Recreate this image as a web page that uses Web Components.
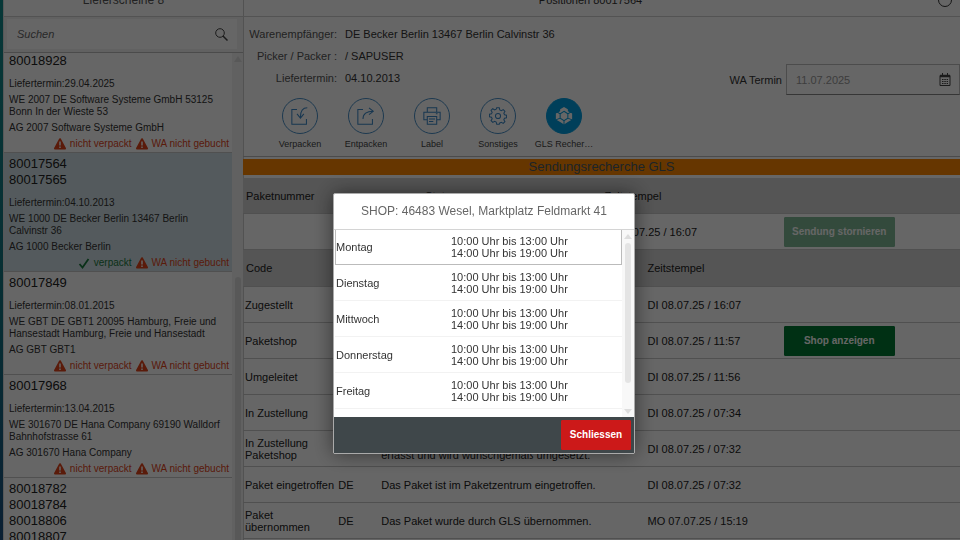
<!DOCTYPE html>
<html lang="de">
<head>
<meta charset="utf-8">
<title>Lieferscheine</title>
<style>
html,body{height:100%}
body{margin:0;overflow:hidden;background:#fff;color:#333;font:11px/12px "Liberation Sans",Arial,sans-serif}
</style>
</head>
<body>
<warehouse-app></warehouse-app>
<script>
const define = (name, html) => customElements.define(name, class extends HTMLElement {
  connectedCallback() {
    if (this.shadowRoot) return;
    const t = document.createElement('template');
    t.innerHTML = typeof html === 'function' ? html(this) : html;
    this.attachShadow({mode: 'open'}).append(t.content.cloneNode(true));
  }
});

const ICONS = {
  pack: '<path d="M7 3H1v17h17v-6M19 1c-5 0-8 4-8 11M7 8l4 5 4-5"/>',
  unpack: '<path d="M7 3H1v17h17v-6M7 14c0-6 4-9 12-9M14 1l5 4-5 4"/>',
  print: '<path d="M5 6V1h11v5M5 15H1V6h19v9h-4M5 11h11v9H5zM7 14h7M7 17h5M15 8h2"/>',
  gear: '<path d="M9 1h3l.6 2.5 1.8.8L16.600 3l2 2-1.300 2.200.8 1.800 2.400.5v3l-2.400.6-.8 1.800 1.300 2.200-2 2-2.200-1.300-1.800.8L12 20H9l-.6-2.500-1.800-.8L4.400 18l-2-2 1.300-2.200-.8-1.800L.5 11.500v-3L2.900 8l.8-1.800L2.400 4l2-2 2.200 1.300 1.800-.8z"/><circle cx="10.500" cy="10.500" r="3"/>',
  box: '<path fill="currentColor" d="M10.500 1l4 2v2l4 2v8l-4 1-4 4-4-4-4-1V7l4-2V3z" transform="translate(1 0)" stroke="none"/><path stroke="#009de0" d="M10.500 5l4.500 3v5l-4.500 3L6 13V8zM2 4l4.500 4M19 4l-4.500 4M10.500 16v5M6 13l-4 2M15 13l4 2"/>'
};
ICONS.box = '<path fill="currentColor" stroke="none" d="M10.500 0l4.500 2.500v2.500l5 2.500v7L15 17.500 10.500 20.500 6 17.500l-5-3v-7L6 5V2.500z"/><path stroke="#009de0" d="M10.500 5l4.500 3v5l-4.500 3L6 13V8zM2 5.500L6 8M19 5.500L15 8M10.500 16v5M6 13l-5 2M15 13l5 2"/>';

define('nav-bar', `
<style>
:host{display:flex;align-items:center;height:33px;padding-top:3px;border-bottom:1px solid #d0d0d0;color:#555}
h1{flex:1;margin:0;text-align:center;font:12px/16px "Liberation Sans",Arial,sans-serif}
:host([small]) h1{font-size:11px;color:#333}
</style><h1><slot></slot></h1><slot name="end"></slot>`);

define('search-field', `
<style>
:host{display:block;padding:2px 6px 3px 3px;background:#f2f2f2;border-bottom:1px solid #bbb}
form{display:flex;align-items:center;height:30px;background:#fff}
input{flex:1;min-width:0;border:0;padding:0 0 0 10px;background:none;font:italic 11px/16px "Liberation Sans",Arial,sans-serif;outline:0}
input::placeholder{color:#666;opacity:1}
button{border:0;background:none;padding:0 9px 0 0;display:flex}
svg{width:13px;height:13px;fill:none;stroke:#444;stroke-width:1}
</style>
<form><input type="search" placeholder="Suchen" aria-label="Suchen"><button type="button" aria-label="Suche starten"><svg viewBox="0 0 13 13"><circle cx="5" cy="5" r="4.300"/><path d="M8 8l4.500 4.500" stroke-width="1.500"/></svg></button></form>`);

define('status-flag', e => `
<style>
:host{display:inline-flex;align-items:center;gap:4px;color:${e.hasAttribute('ok') ? '#1a7a3e' : '#e0441a'}}
svg{width:12px;height:12px;fill:none;stroke:currentColor}
</style>
${e.hasAttribute('ok')
  ? '<svg viewBox="0 0 12 12"><path d="M1.500 7l3 3.500L10.500 2" stroke-width="1.800"/></svg>'
  : '<svg viewBox="0 0 12 12"><path d="M6 1.200L11 10.500H1z" fill="currentColor" stroke-width="2" stroke-linejoin="round"/><path d="M6 3.500v4M6 8.500v1.500" stroke="#fff" stroke-width="1.500"/></svg>'}
<span><slot></slot></span>`);

define('delivery-item', `
<style>
:host{display:block;padding:3px 3px 2px 5px;border-bottom:1px solid #c8c8c8}
:host([selected]){background:#d2e2e8}
h2{margin:0 0 9px;font:13px/16px "Liberation Sans",Arial,sans-serif;color:#222}
p{margin:0 0 4px}
.flags{display:flex;justify-content:flex-end;gap:4px;height:12px}
</style>
<h2><slot name="numbers"></slot></h2><p><slot name="date"></slot></p><p><slot name="to"></slot></p><p><slot name="from"></slot></p><div class="flags"><slot></slot></div>`);

const deliveries = [
  ['80018928', '29.04.2025', 'WE 2007 DE Software Systeme GmbH 53125<br>Bonn In der Wieste 53', 'AG 2007 Software Systeme GmbH'],
  ['80017564<br>80017565', '04.10.2013', 'WE 1000 DE Becker Berlin 13467 Berlin<br>Calvinstr 36', 'AG 1000 Becker Berlin', true],
  ['80017849', '08.01.2015', 'WE GBT DE GBT1 20095 Hamburg, Freie und<br>Hansestadt Hamburg, Freie und Hansestadt', 'AG GBT GBT1'],
  ['80017968', '13.04.2015', 'WE 301670 DE Hana Company 69190 Walldorf<br>Bahnhofstrasse 61', 'AG 301670 Hana Company'],
  ['80018782<br>80018784<br>80018806<br>80018807']
];
define('delivery-list', `
<style>
:host{display:grid;grid-template-columns:minmax(0,1fr) 11px;min-height:0;overflow:hidden;background:#fff;font-size:10px}
.items{margin-top:-3px;white-space:nowrap}
.bar{background:#f3f3f3;display:flex;flex-direction:column;align-items:center}
.up{border:4px solid transparent;border-top:0;border-bottom:6px solid #ddd;margin-top:3px}
.thumb{width:6px;flex:1;margin-top:215px;border-radius:3px 3px 0 0;background:#dcdcdc}
</style>
<div class="items">${deliveries.map(([n, d, to, from, sel]) => `<delivery-item${sel ? ' selected' : ''}><span slot="numbers">${n}</span>${d ? `<span slot="date">Liefertermin:${d}</span><span slot="to">${to}</span><span slot="from">${from}</span>${sel ? '<status-flag ok>verpackt</status-flag>' : '<status-flag>nicht verpackt</status-flag>'}<status-flag>WA nicht gebucht</status-flag>` : ''}</delivery-item>`).join('')}</div>
<div class="bar"><i class="up"></i><i class="thumb"></i></div>`);

define('delivery-facts', `
<style>
:host{display:flex;justify-content:space-between;align-items:flex-end;padding-top:6px}
dl{display:grid;grid-template-columns:94px auto;column-gap:8px;margin:0;line-height:22px;white-space:nowrap}
dt{text-align:right;color:#555}dd{margin:0}
form{display:flex;align-items:center;gap:4px;margin-bottom:-6px}
.field{display:flex;align-items:center;width:172px;height:29px;border:1px solid #bfbfbf;border-bottom-color:#888}
input{flex:1;min-width:0;border:0;background:none;padding:0 0 0 9px;color:#999;font:11px/16px "Liberation Sans",Arial,sans-serif}
button{border:0;background:none;padding:0 8px 0 0;display:flex}
svg{width:12px;height:13px}
</style>
<dl><dt>Warenempfänger:</dt><dd>DE Becker Berlin 13467 Berlin Calvinstr 36</dd><dt>Picker / Packer :</dt><dd>/ SAPUSER</dd><dt>Liefertermin:</dt><dd>04.10.2013</dd></dl>
<form><label for="d">WA Termin</label><span class="field"><input id="d" value="11.07.2025"><button type="button" aria-label="Kalender"><svg viewBox="0 0 12 13" fill="none" stroke="#444"><path d="M1 2.500h10v10H1z"/><path d="M1 3h10" stroke-width="2.500"/><path d="M3.500 0v3M8.500 0v3"/><path d="M3 6.500h6M3 8.500h6M3 10.500h6" stroke-dasharray="1.500 .8"/></svg></button></span></form>`);

define('icon-tab', e => `
<style>
:host{display:block;width:66px;flex:none}
button{width:100%;border:0;padding:0;background:none;color:#444;font:9px/12px "Liberation Sans",Arial,sans-serif;display:flex;flex-direction:column;align-items:center;gap:4px}
.c{width:34px;height:34px;border:1px solid #4a90c8;border-radius:50%;display:grid;place-items:center;color:#3a88c8}
:host([selected]) .c{background:#009de0;border-color:#009de0;color:#fff}
svg{width:18px;height:18px;fill:none;stroke:currentColor;stroke-width:1.200}
</style>
<button type="button"><span class="c"><svg viewBox="0 0 21 21">${ICONS[e.getAttribute('icon')]}</svg></span><span><slot></slot></span></button>`);

define('icon-tabs', `
<style>:host{display:flex;padding:9px 0 6px 24px;border-bottom:1px solid #bbb}</style>
<icon-tab icon="pack">Verpacken</icon-tab><icon-tab icon="unpack">Entpacken</icon-tab><icon-tab icon="print">Label</icon-tab><icon-tab icon="gear">Sonstiges</icon-tab><icon-tab icon="box" selected>GLS Recher…</icon-tab>`);

define('action-button', `
<style>
:host{display:inline-block;--bg:#007833}
:host([soft]){--bg:#7fba97}
:host([tone=red]){--bg:#cc1919}
button{min-width:111px;height:30px;padding:0 4px;border:1px solid var(--bg);border-radius:1px;background:var(--bg);color:#fff;font:bold 10px/16px "Liberation Sans",Arial,sans-serif;white-space:nowrap}
:host([tone=red]) button{min-width:70px}
</style><button type="button"><slot></slot></button>`);

const events = [
  ['Zugestellt', '', '', 'DI 08.07.25 / 16:07'],
  ['Paketshop', '', '', 'DI 08.07.25 / 11:57', '<action-button>Shop anzeigen</action-button>'],
  ['Umgeleitet', '', '', 'DI 08.07.25 / 11:56'],
  ['In Zustellung', '', '', 'DI 08.07.25 / 07:34'],
  ['In Zustellung<br>Paketshop', '', '<br>erfasst und wird wunschgemäß umgesetzt.', 'DI 08.07.25 / 07:32'],
  ['Paket eingetroffen', 'DE', 'Das Paket ist im Paketzentrum eingetroffen.', 'DI 08.07.25 / 07:32'],
  ['Paket<br>übernommen', 'DE', 'Das Paket wurde durch GLS übernommen.', 'MO 07.07.25 / 15:19']
];
define('tracking-tables', `
<style>
:host{display:block;padding-top:2px}
h2{margin:0 0 3px;background:#ff8800;color:#4a5a66;text-align:center;font:13px/16px "Liberation Sans",Arial,sans-serif}
table{width:100%;border-collapse:separate;border-spacing:0;table-layout:fixed;color:#222}
th,td{height:35px;padding:0 0 0 2px;border-bottom:1px solid #c8c8c8;text-align:left;font-weight:400;white-space:nowrap}
th{background:#d4d4d4;padding-left:3px}
td:nth-child(n+4){padding-left:3px}
.events th{height:36px}
.w1{width:13%}.w2{width:6%}.w3{width:37%}.w4{width:19%}
action-button{vertical-align:middle}
</style>
<h2>Sendungsrecherche GLS</h2>
<table><thead><tr><th>Paketnummer</th><th>Status</th><th>Zeitstempel</th><th></th></tr></thead>
<tbody><tr><td></td><td></td><td>DI 08.07.25 / 16:07</td><td><action-button soft>Sendung stornieren</action-button></td></tr></tbody></table>
<table class="events"><colgroup><col class="w1"><col class="w2"><col class="w3"><col class="w4"><col></colgroup><thead><tr><th>Code</th><th></th><th></th><th>Zeitstempel</th><th></th></tr></thead>
<tbody>${events.map(([a, b, c, d, e = '']) => `<tr><td>${a}</td><td>${b}</td><td>${c}</td><td>${d}</td><td>${e}</td></tr>`).join('')}</tbody></table>`);

define('hours-dialog', `
<style>
:host{position:fixed;inset:0;display:grid;justify-content:center;align-content:start;padding:193px 0 0 8px;background:rgba(0,0,0,.6)}
section{width:300px;border:1px solid #aaa;border-radius:2px;background:#fff;box-shadow:0 0 20px rgba(0,0,0,.5)}
h2{margin:0;color:#666;text-align:center;font:12px/35px "Liberation Sans",Arial,sans-serif;border-bottom:1px solid #d4d4d4}
.body{display:grid;grid-template-columns:minmax(0,1fr) 12px;height:187px;overflow:hidden}
.scroll{overflow:hidden;padding-left:1px}
table{width:100%;border-collapse:separate;border-spacing:0;table-layout:fixed}
td{height:35px;padding:0 0 0 1px;border-bottom:1px solid #f2f2f2}
td:first-child{width:114px}
tr:first-child td{height:34px;border-bottom-color:#bbb}
tr:first-child td:first-child{border-left:1px solid #bbb;padding-left:0}
tr:first-child td:last-child{border-right:1px solid #bbb}
.bar{display:flex;flex-direction:column;align-items:center;background:#f8f8f8;padding:4px 0 3px}
.up{border:4px solid transparent;border-top:0;border-bottom:5px solid #ddd}
.down{border:4px solid transparent;border-bottom:0;border-top:5px solid #ddd;margin-top:auto}
.thumb{width:6px;height:140px;border-radius:3px;background:#e4e4e4;margin-top:4px}
footer{display:flex;justify-content:flex-end;padding:3px;height:30px;background:#3f474a}
</style>
<section role="dialog" aria-labelledby="t"><h2 id="t">SHOP: 46483 Wesel, Marktplatz Feldmarkt 41</h2>
<div class="body"><div class="scroll"><table>${['Montag', 'Dienstag', 'Mittwoch', 'Donnerstag', 'Freitag'].map(d => `<tr><td>${d}</td><td>10:00 Uhr bis 13:00 Uhr<br>14:00 Uhr bis 19:00 Uhr</td></tr>`).join('')}</table></div>
<div class="bar"><i class="up"></i><i class="thumb"></i><i class="down"></i></div></div>
<footer><action-button tone="red">Schliessen</action-button></footer></section>`);

define('warehouse-app', `
<style>
:host{display:grid;grid-template-columns:3px 25% minmax(0,1fr);height:100vh;overflow:hidden}
.strip{background:linear-gradient(#128a8a,#12707f 60%,#1c4f80)}
aside{display:flex;flex-direction:column;border-left:1px solid #ddd;border-right:1px solid #ccc;margin-right:-1px}
aside,main{min-width:0;min-height:0;overflow:hidden}
delivery-list{flex:1}
nav-bar{margin-top:-20px}
.end{width:14px;height:14px;margin:0 8px 0 0}
</style>
<div class="strip"></div>
<aside><nav-bar>Lieferscheine 8</nav-bar><search-field></search-field><delivery-list></delivery-list></aside>
<main><nav-bar small>Positionen 80017564<svg class="end" slot="end" viewBox="0 0 14 14" fill="none" stroke="#333"><circle cx="7" cy="7" r="6.500"/></svg></nav-bar><delivery-facts></delivery-facts><icon-tabs></icon-tabs><tracking-tables></tracking-tables></main>
<hours-dialog></hours-dialog>`);
</script>
</body>
</html>
